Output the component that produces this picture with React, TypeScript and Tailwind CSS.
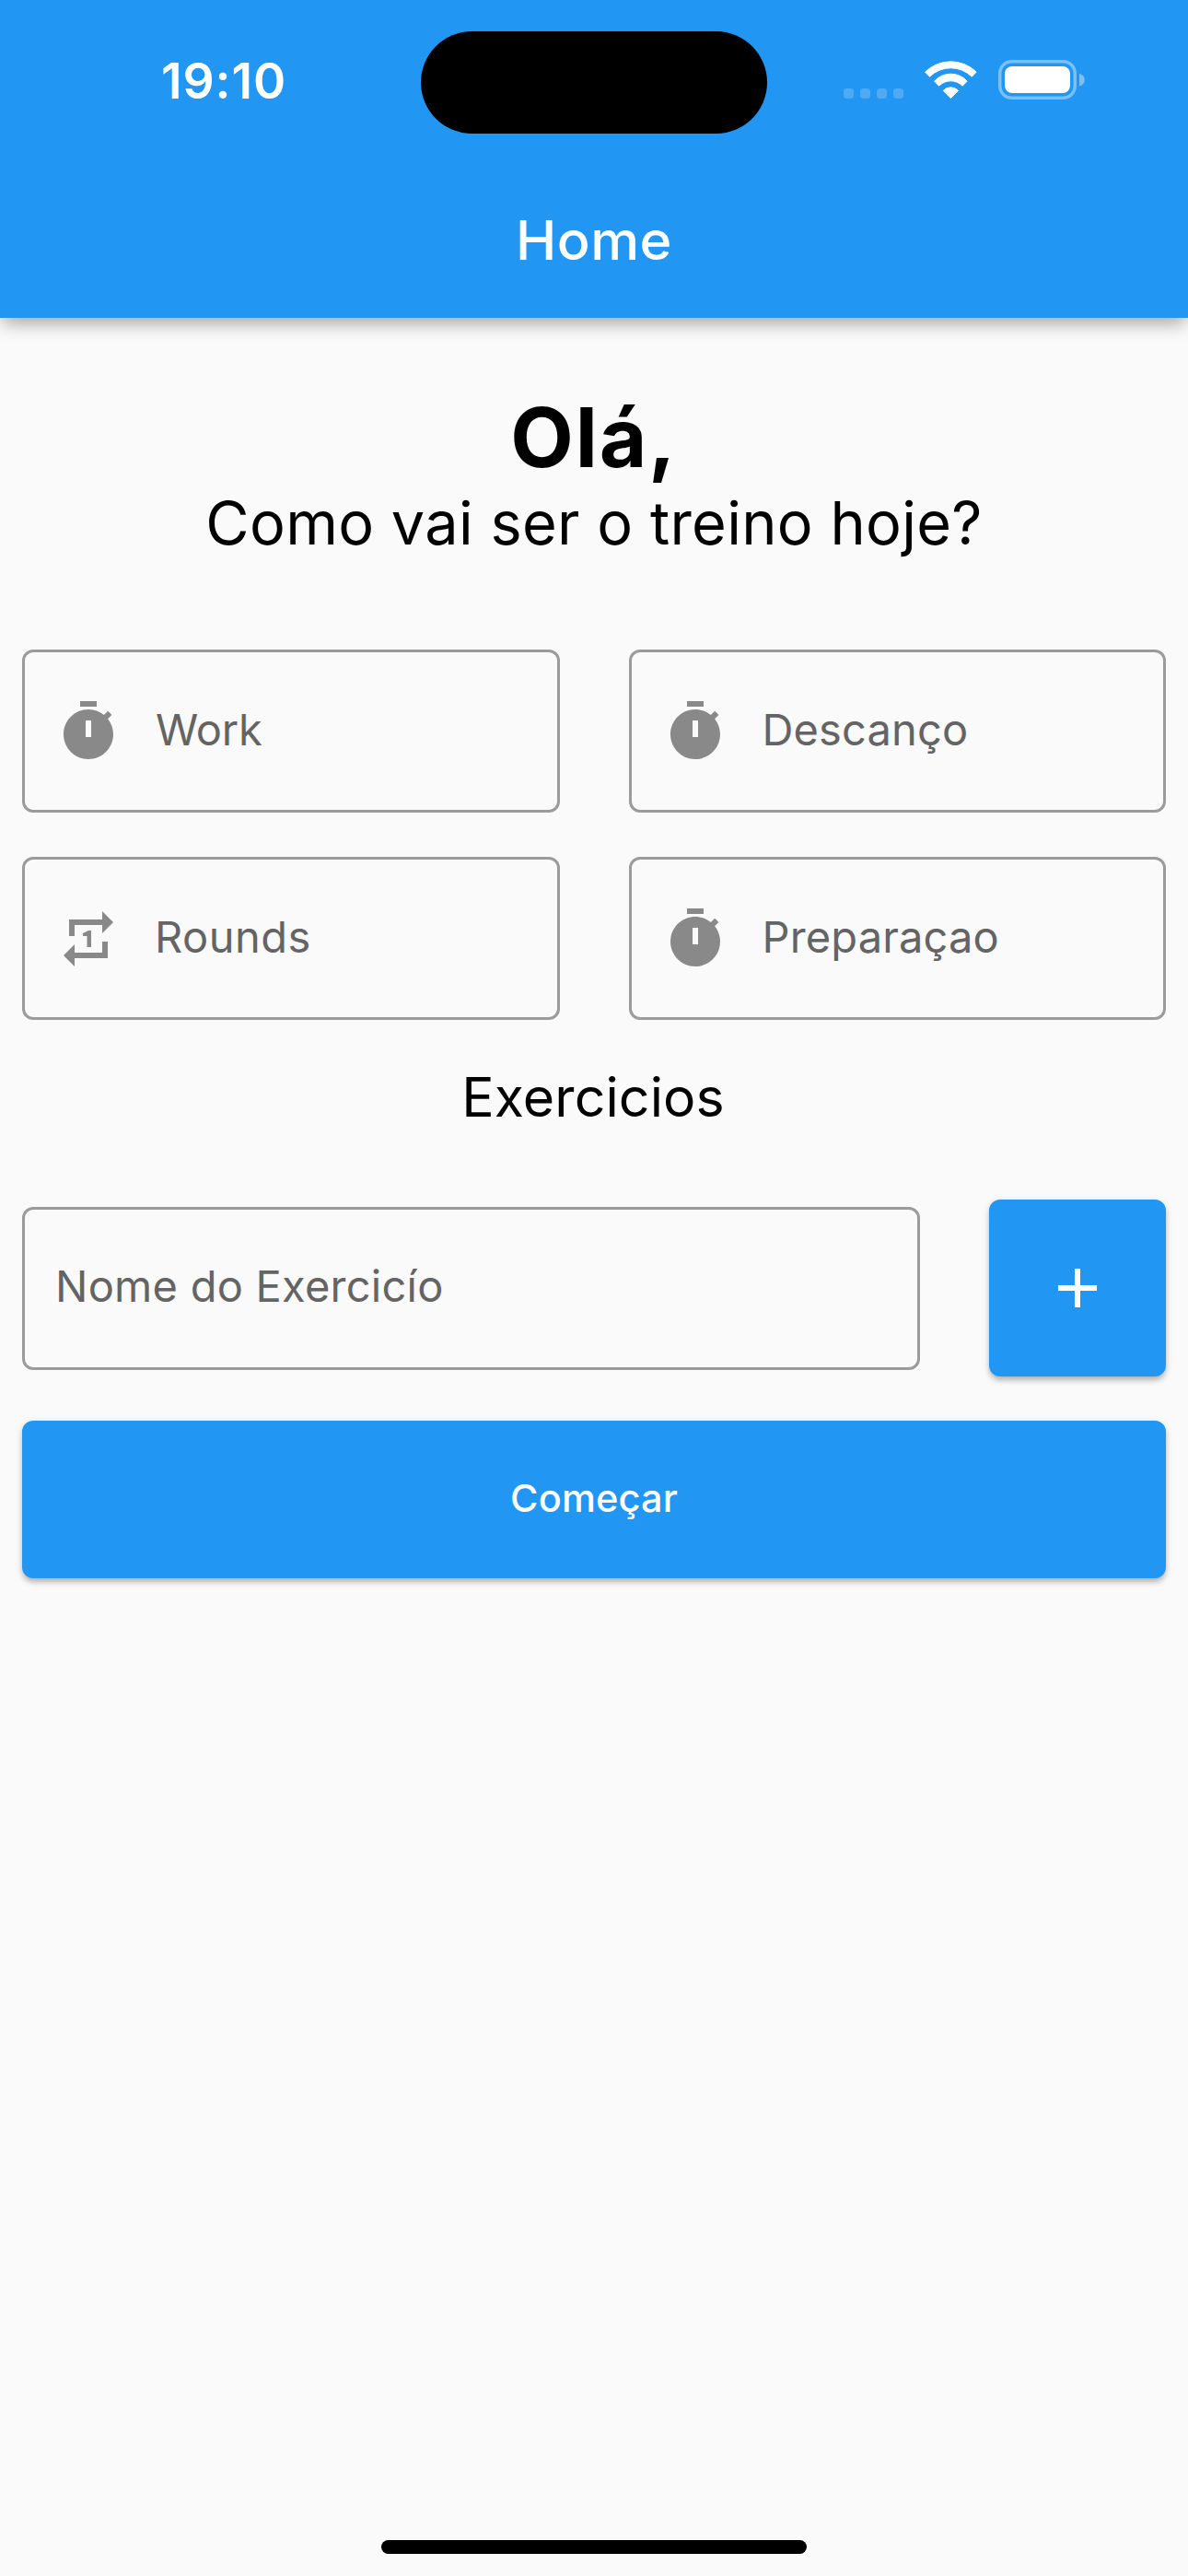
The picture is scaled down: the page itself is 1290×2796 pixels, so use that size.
import type { ReactNode } from 'react';

function SignalDots() {
  return (
    <div className="flex gap-[7px] pt-[31px]">
      {[0, 1, 2, 3].map((i) => (
        <span key={i} className="size-[11px] rounded-[3.5px] bg-white/20" />
      ))}
    </div>
  );
}

function WifiIcon() {
  return (
    <svg className="h-[43px] w-[57px]" viewBox="0 0 57 43" fill="white" stroke="white" strokeWidth="1" strokeLinejoin="round">
      <path d="M0.6 13A40 40 0 0 1 56.2 13L51.3 18.1A32.6 32.6 0 0 0 5.5 18.1Z" transform="translate(0 0.1)" />
      <path d="M10.6 23.1A24 24 0 0 1 46.2 23.1L41.2 28.2A18 18 0 0 0 15.6 28.2Z" />
      <path d="M20.2 33.4A11.2 11.2 0 0 1 36.6 33.4L28.4 41.6Z" />
    </svg>
  );
}

function BatteryIcon() {
  return (
    <svg className="h-[43px] w-[94px]" viewBox="0 0 94 43" fill="none">
      <rect x="1.75" y="1.75" width="81.5" height="39.5" rx="13" stroke="white" strokeOpacity="0.4" strokeWidth="3.5" />
      <rect x="7" y="7" width="71" height="29" rx="8" fill="white" />
      <path d="M88 14.7C91.8 16 93.8 18.6 93.8 21.7C93.8 24.8 91.8 27.4 88 28.7Z" fill="white" fillOpacity="0.4" />
    </svg>
  );
}

function TimerIcon() {
  return (
    <svg className="size-[72px]" viewBox="0 0 24 24" fill="#898989">
      <path
        fillRule="evenodd"
        d="M15 1H9v2h6V1zm-4 13h2V8h-2v6zm8.03-6.61l1.42-1.42c-.43-.51-.9-.99-1.41-1.41l-1.42 1.42C16.07 4.74 14.12 4 12 4c-4.97 0-9 4.03-9 9s4.02 9 9 9 9-4.03 9-9c0-2.12-.74-4.07-1.97-5.61z"
      />
    </svg>
  );
}

function RepeatOneIcon() {
  return (
    <svg className="size-[72px]" viewBox="0 0 24 24" fill="#898989">
      <path d="M7 7h10v3l4-4-4-4v3H5v6h2V7zm10 10H7v-3l-4 4 4 4v-3h12v-6h-2v4zm-4-2V9h-1l-2 1v1h1.5v4H13z" />
    </svg>
  );
}

function Field({ icon, children }: { icon: ReactNode; children: ReactNode }) {
  return (
    <div className="flex h-[177px] items-center gap-9 rounded-[12px] border-3 border-[#9b9b9b] pl-[33px]">
      {icon}
      <span className="-mt-[3px] text-[47px] leading-[60px] text-[#646464]">{children}</span>
    </div>
  );
}

export default function App() {
  return (
    <div className="flex h-[2796px] w-[1290px] flex-col bg-[#fafafa] font-[Inter,'Liberation_Sans',sans-serif] text-black">
      <header className="h-[345px] shrink-0 bg-[#2196f3] text-white shadow-[0_9px_18px_-3px_rgba(0,0,0,0.34)]">
        <div className="grid h-[177px] grid-cols-[457px_376px_457px]">
          <div className="pt-[58px] pl-[175px] text-[53.5px] leading-[60px] font-semibold tracking-[0.85px]">19:10</div>
          <div className="mt-[33.5px] h-[111px] rounded-full bg-black" />
          <div className="flex items-start pt-[65px] pl-[83px]">
            <SignalDots />
            <div className="ml-[23px]">
              <WifiIcon />
            </div>
            <div className="ml-[23px]">
              <BatteryIcon />
            </div>
          </div>
        </div>
        <h1 className="text-center text-[59.5px] leading-[166px] font-medium tracking-[0.45px]">Home</h1>
      </header>

      <main className="flex-1 px-6 pt-[76px]">
        <h2 className="text-center text-[89px] leading-[108px] font-bold tracking-[1.8px]">Olá,</h2>
        <p className="text-center text-[64.8px] leading-[78px] tracking-[0.3px]">Como vai ser o treino hoje?</p>

        <div className="mt-[98px] grid grid-cols-2 gap-x-[75px] gap-y-12">
          <Field icon={<TimerIcon />}>
            <span className="pl-px tracking-[-0.2px]">Work</span>
          </Field>
          <Field icon={<TimerIcon />}>
            <span className="pl-px tracking-[0.15px]">Descanço</span>
          </Field>
          <Field icon={<RepeatOneIcon />}>
            <span className="tracking-[0.5px]">Rounds</span>
          </Field>
          <Field icon={<TimerIcon />}>
            <span className="pl-px tracking-[0.15px]">Preparaçao</span>
          </Field>
        </div>

        <h3 className="mt-[49px] pr-[2px] text-center text-[59px] leading-[70px] tracking-[0.1px]">Exercicios</h3>

        <div className="mt-[76px] flex items-center gap-[75px]">
          <div className="flex h-[177px] flex-1 items-center rounded-[12px] border-3 border-[#9b9b9b] pl-[33px]">
            <span className="-mt-[4px] text-[47px] leading-[60px] tracking-[0.25px] text-[#646464]">Nome do Exercicío</span>
          </div>
          <button className="flex size-[192px] items-center justify-center rounded-[12px] bg-[#2196f3] shadow-[0_5px_6px_-1px_rgba(0,0,0,0.25),0_1px_8px_rgba(0,0,0,0.1)]">
            <svg className="size-[72px]" viewBox="0 0 24 24" fill="white">
              <path d="M19 13h-6v6h-2v-6H5v-2h6V5h2v6h6v2z" />
            </svg>
          </button>
        </div>

        <button className="mt-12 flex h-[171px] w-full items-center justify-center rounded-[12px] bg-[#2196f3] pb-[3px] text-[41.5px] leading-[48px] font-medium tracking-[0.15px] text-white shadow-[0_5px_6px_-1px_rgba(0,0,0,0.25),0_1px_8px_rgba(0,0,0,0.1)]">
          Começar
        </button>
      </main>

      <div className="mb-6 h-[15px] w-[462px] shrink-0 self-center rounded-full bg-black" />
    </div>
  );
}
